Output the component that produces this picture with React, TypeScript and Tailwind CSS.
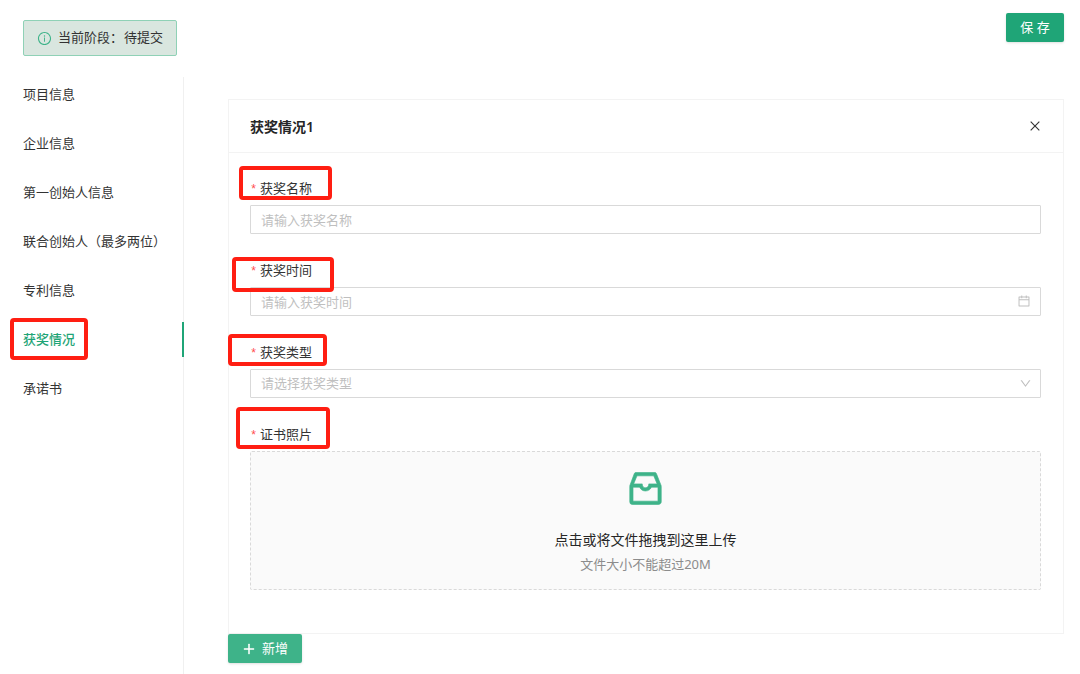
import { useState } from "react";
import type { ReactNode } from "react";
import {
  AiOutlineCalendar,
  AiOutlineClose,
  AiOutlineDown,
  AiOutlineInbox,
  AiOutlineInfoCircle,
  AiOutlinePlus,
} from "react-icons/ai";

const sections = [
  "项目信息",
  "企业信息",
  "第一创始人信息",
  "联合创始人（最多两位）",
  "专利信息",
  "获奖情况",
  "承诺书",
];

const control =
  "block h-[29px] w-full rounded-[1px] border border-[#d9d9d9] bg-white px-2.5 text-[13px] outline-none placeholder:text-[#bfbfbf] focus:border-[#3eb389]";

function Marker({ place }: { place: string }) {
  return (
    <span
      aria-hidden="true"
      className={`pointer-events-none absolute z-10 rounded-[4px] border-4 border-[#ff1e12] ${place}`}
    />
  );
}

function Field({
  id,
  label,
  marker,
  children,
}: {
  id: string;
  label: string;
  marker: string;
  children: ReactNode;
}) {
  return (
    <div className="relative flex flex-col gap-[7px]">
      <label htmlFor={id} className="flex h-5 items-center gap-1 text-[13px] leading-5">
        <span className="w-1.5 pt-1 font-['Liberation_Mono',monospace] text-xs leading-4 text-[#ff4d4f]">*</span>
        {label}
      </label>
      {children}
      <Marker place={marker} />
    </div>
  );
}

export default function App() {
  const [active, setActive] = useState("获奖情况");
  const [kind, setKind] = useState("");

  return (
    <div className="flex min-h-screen flex-col bg-white font-['Noto_Sans','Noto_Sans_CJK_SC',sans-serif] text-[13px] text-[#333]">
      <header className="flex h-[77px] shrink-0 items-start justify-between pr-4 pl-[23px]">
        <div className="mt-5 flex h-9 items-center rounded-[2px] border border-[#8fd1b6] bg-[#d9e6df] px-[13px]">
          <AiOutlineInfoCircle className="mr-1.5 size-[15px] text-[#3eb389]" />
          <span className="mr-px">当前阶段：</span>
          <span>待提交</span>
        </div>
        <button
          type="button"
          className="mt-[13px] h-[29px] min-w-[58px] rounded-[2px] bg-[#1fa577] px-[14px] text-[13px] text-white shadow-sm"
        >
          保 存
        </button>
      </header>

      <div className="flex grow">
        <nav className="flex w-[184px] shrink-0 flex-col gap-[14px] border-r border-[#f0f0f0]">
          {sections.map((name) => (
            <a
              key={name}
              href="#"
              onClick={() => setActive(name)}
              className={
                name === active
                  ? "relative -mr-px flex h-[35px] items-center border-r-2 border-[#1fa577] pl-[23px] font-medium text-[#1fa577]"
                  : "relative flex h-[35px] items-center pl-[23px]"
              }
            >
              {name}
              {name === "获奖情况" && <Marker place="-top-1 left-2.5 h-[42px] w-[78px]" />}
            </a>
          ))}
        </nav>

        <main className="min-w-0 grow pt-[22px] pr-4 pl-11">
          <section className="border border-[#f3f3f3]">
            <div className="flex h-[53px] items-center justify-between border-b border-[#f3f3f3] px-[21px]">
              <h2 className="text-[14px] font-semibold text-[#262626]">获奖情况1</h2>
              <button type="button" aria-label="关闭" className="text-[#333]">
                <AiOutlineClose className="size-[14px]" />
              </button>
            </div>

            <form className="flex flex-col gap-[26px] pt-[25px] pr-[22px] pb-[43px] pl-[21px]">
              <Field id="award-name" label="获奖名称" marker="-top-3 -left-[11px] h-[34px] w-[93px]">
                <input id="award-name" type="text" placeholder="请输入获奖名称" className={control} />
              </Field>

              <Field id="award-date" label="获奖时间" marker="-top-[3px] -left-[18px] h-[35px] w-[102px]">
                <div className="relative">
                  <input id="award-date" type="text" placeholder="请输入获奖时间" className={control} />
                  <AiOutlineCalendar className="pointer-events-none absolute top-[7px] right-2.5 size-[14px] text-[#bfbfbf]" />
                </div>
              </Field>

              <Field id="award-type" label="获奖类型" marker="-top-2 -left-[22px] h-8 w-[99px]">
                <div className="relative">
                  <select
                    id="award-type"
                    value={kind}
                    onChange={(e) => setKind(e.target.value)}
                    className={`appearance-none ${control} ${kind ? "text-[#333]" : "text-[#bfbfbf]"}`}
                  >
                    <option value="">请选择获奖类型</option>
                  </select>
                  <AiOutlineDown className="pointer-events-none absolute top-2 right-[9px] size-[13px] text-[#bfbfbf]" />
                </div>
              </Field>

              <Field id="award-photo" label="证书照片" marker="-top-[17px] -left-[14px] h-[42px] w-[94px]">
                <label
                  htmlFor="award-photo"
                  className="relative flex h-[139px] cursor-pointer flex-col items-center rounded-[2px] border border-dashed border-[#d9d9d9] bg-[#fafafa] pt-[15px]"
                >
                  <AiOutlineInbox className="size-[43px] text-[#3eb389]" strokeWidth={16} stroke="currentColor" />
                  <span className="mt-[18px] text-[14px] leading-6 text-[#262626]">点击或将文件拖拽到这里上传</span>
                  <span className="leading-6 text-[#8c8c8c]">文件大小不能超过20M</span>
                  <input id="award-photo" type="file" className="sr-only" />
                </label>
              </Field>
            </form>
          </section>

          <button
            type="button"
            className="flex h-[29px] items-center gap-1.5 rounded-[2px] bg-[#3eb389] px-[14px] text-[13px] text-white shadow-sm"
          >
            <AiOutlinePlus className="size-[14px]" strokeWidth={40} />
            新增
          </button>
        </main>
      </div>
    </div>
  );
}
